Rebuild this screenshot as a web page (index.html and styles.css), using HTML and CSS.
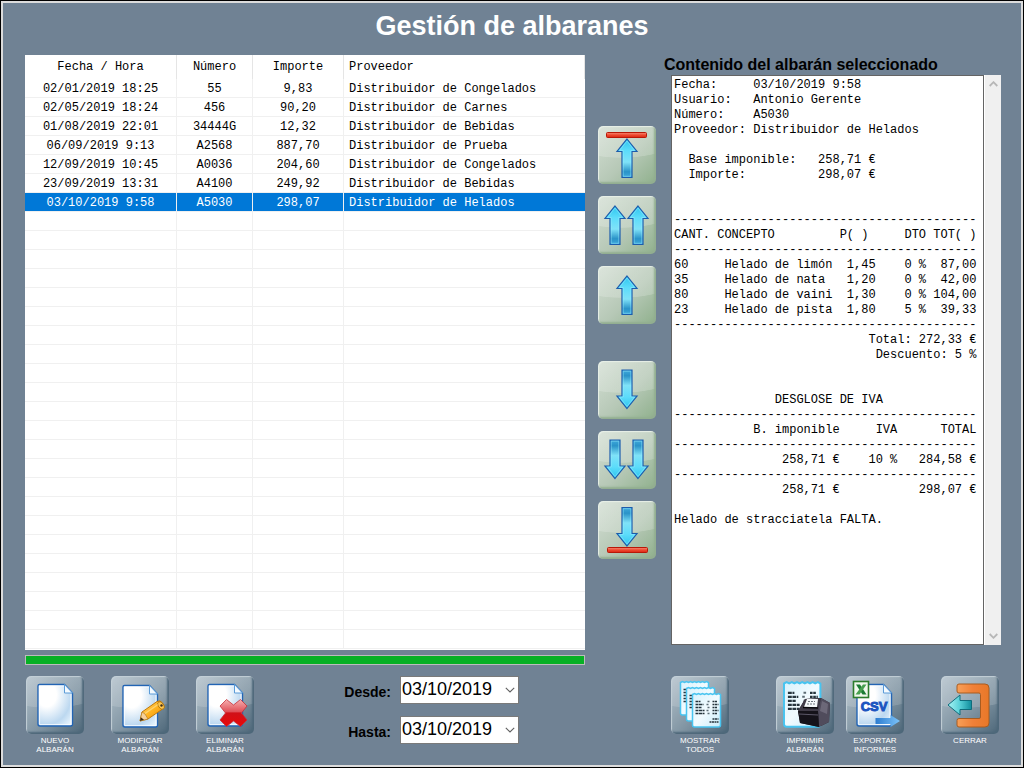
FILE: index.html
```html
<!DOCTYPE html>
<html lang="es">
  <head>
    <meta charset="UTF-8">
    <title>Gestión de albaranes</title>
    <link rel="stylesheet" href="styles.css">
  </head>

  <body>

    <!-- shared gradients and shapes -->
    <svg class="defs" width="0" height="0" aria-hidden="true">
      <defs>
        <linearGradient id="gArrow" x1="0" y1="0" x2="0" y2="1">
          <stop offset="0" stop-color="#2cc4ee"/>
          <stop offset=".3" stop-color="#5cdcfa"/>
          <stop offset=".6" stop-color="#7fe2f8"/>
          <stop offset=".85" stop-color="#2a93c8"/>
          <stop offset="1" stop-color="#3fa9dc"/>
        </linearGradient>
        <linearGradient id="gRed" x1="0" y1="0" x2="0" y2="1">
          <stop offset="0" stop-color="#f58d78"/>
          <stop offset=".5" stop-color="#ee4a30"/>
          <stop offset="1" stop-color="#dc2410"/>
        </linearGradient>
        <linearGradient id="gCross" x1="0" y1="0" x2="0" y2="1">
          <stop offset="0" stop-color="#f6b0b0"/>
          <stop offset=".45" stop-color="#e05058"/>
          <stop offset=".5" stop-color="#d01018"/>
          <stop offset="1" stop-color="#e80808"/>
        </linearGradient>
        <radialGradient id="gPage" cx=".25" cy=".25" r=".95">
          <stop offset="0" stop-color="#ffffff"/>
          <stop offset=".3" stop-color="#ffffff"/>
          <stop offset=".75" stop-color="#bcd8f0"/>
          <stop offset="1" stop-color="#e4f2fc"/>
        </radialGradient>
        <linearGradient id="gPencil" x1="0" y1="0" x2="1" y2="1">
          <stop offset="0" stop-color="#ffe088"/>
          <stop offset=".5" stop-color="#ffb420"/>
          <stop offset="1" stop-color="#e88800"/>
        </linearGradient>
        <linearGradient id="gSheet" x1="0" y1="0" x2="1" y2="1">
          <stop offset="0" stop-color="#d8f2fc"/>
          <stop offset=".5" stop-color="#f2fbff"/>
          <stop offset="1" stop-color="#c8ecfa"/>
        </linearGradient>
        <linearGradient id="gSend" x1="0" y1="0" x2="1" y2="0">
          <stop offset="0" stop-color="#2c7cd0"/>
          <stop offset="1" stop-color="#7cc4fa"/>
        </linearGradient>
        <linearGradient id="gOrange" x1="0" y1="0" x2="1" y2="0">
          <stop offset="0" stop-color="#f8a058"/>
          <stop offset=".5" stop-color="#f08038"/>
          <stop offset="1" stop-color="#e87828"/>
        </linearGradient>
        <linearGradient id="gTeal" x1="0" y1="0" x2="1" y2="0">
          <stop offset="0" stop-color="#a8f4f4"/>
          <stop offset=".5" stop-color="#58d0d8"/>
          <stop offset="1" stop-color="#108c9c"/>
        </linearGradient>
        <g id="arrow">
          <path d="M10.500 1 L20.500 13.500 H15.500 V39.500 H5.500 V13.500 H.5Z" fill="url(#gArrow)" stroke="#1c5cac" stroke-width="1.200"/>
          <path d="M10.500 3 L18 12.500 H14.300 V38.300 H6.700 V12.500 H3Z" fill="none" stroke="#9cecfc" stroke-width=".7" opacity=".7"/>
        </g>
        <g id="page">
          <path d="M13.500 8.500 H38.500 L46.500 17 V48 Q46.500 50 44.500 50 H14 Q12 50 12 48 V10 Q12 8.500 13.500 8.500Z" fill="url(#gPage)" stroke="#2264b4" stroke-width="1.400"/>
          <path d="M13.500 48.500 V10 H38 M45 18 V48.500 H14" fill="none" stroke="#ffffff" stroke-width="1.200" opacity=".7"/>
          <path d="M38.500 8.500 V17 H46.500Z" fill="#f4faff" stroke="#5c9cd8"/>
        </g>
        <g id="sheet">
          <path d="M0 1.500 l2-1 2 1 2-1 2 1 2-1 2 1 2-1 2 1 2-1 2 1 2-1 2 1 2-1 2 1 V32 Q28 34 26 34 H2 Q0 34 0 32Z" fill="url(#gSheet)" stroke="#48c4f0" stroke-width="1.500"/>
          <path d="M3 8.500h5 M3 11.500h8 M3 14.500h6 M3 17.500h9 M3 20.500h9" stroke="#26343c" stroke-width="1.700" stroke-dasharray="3 .5"/>
          <path d="M15 8.500h2 M14 11.500h2 M15 14.500h2 M14 17.500h2 M15 20.500h2" stroke="#5c6c74" stroke-width="1.400"/>
          <path d="M20 8.500h5 M20 11.500h6 M20 14.500h5 M20 17.500h6 M20 20.500h5 M20 26h6 M17 29h9" stroke="#26343c" stroke-width="1.700" stroke-dasharray="2 .5"/>
        </g>
      </defs>
    </svg>

    <div class="window">
      <h1 class="title">Gestión de albaranes</h1>

      <div class="main">
        <div class="list">
          <table class="albaranes">
            <colgroup><col class="col-fecha"><col class="col-numero"><col class="col-importe"><col></colgroup>
            <thead>
              <tr><th>Fecha / Hora</th><th>Número</th><th>Importe</th><th>Proveedor</th></tr>
            </thead>
            <tbody>
              <tr><td>02/01/2019 18:25</td><td>55</td><td>9,83</td><td>Distribuidor de Congelados</td></tr>
              <tr><td>02/05/2019 18:24</td><td>456</td><td>90,20</td><td>Distribuidor de Carnes</td></tr>
              <tr><td>01/08/2019 22:01</td><td>34444G</td><td>12,32</td><td>Distribuidor de Bebidas</td></tr>
              <tr><td>06/09/2019 9:13</td><td>A2568</td><td>887,70</td><td>Distribuidor de Prueba</td></tr>
              <tr><td>12/09/2019 10:45</td><td>A0036</td><td>204,60</td><td>Distribuidor de Congelados</td></tr>
              <tr><td>23/09/2019 13:31</td><td>A4100</td><td>249,92</td><td>Distribuidor de Bebidas</td></tr>
              <tr class="selected"><td>03/10/2019 9:58</td><td>A5030</td><td>298,07</td><td>Distribuidor de Helados</td></tr>
              <tr><td></td><td></td><td></td><td></td></tr>
              <tr><td></td><td></td><td></td><td></td></tr>
              <tr><td></td><td></td><td></td><td></td></tr>
              <tr><td></td><td></td><td></td><td></td></tr>
              <tr><td></td><td></td><td></td><td></td></tr>
              <tr><td></td><td></td><td></td><td></td></tr>
              <tr><td></td><td></td><td></td><td></td></tr>
              <tr><td></td><td></td><td></td><td></td></tr>
              <tr><td></td><td></td><td></td><td></td></tr>
              <tr><td></td><td></td><td></td><td></td></tr>
              <tr><td></td><td></td><td></td><td></td></tr>
              <tr><td></td><td></td><td></td><td></td></tr>
              <tr><td></td><td></td><td></td><td></td></tr>
              <tr><td></td><td></td><td></td><td></td></tr>
              <tr><td></td><td></td><td></td><td></td></tr>
              <tr><td></td><td></td><td></td><td></td></tr>
              <tr><td></td><td></td><td></td><td></td></tr>
              <tr><td></td><td></td><td></td><td></td></tr>
              <tr><td></td><td></td><td></td><td></td></tr>
              <tr><td></td><td></td><td></td><td></td></tr>
              <tr><td></td><td></td><td></td><td></td></tr>
              <tr><td></td><td></td><td></td><td></td></tr>
              <tr><td></td><td></td><td></td><td></td></tr>
            </tbody>
          </table>
          <progress class="carga" value="100" max="100" aria-label="Carga"></progress>
        </div>

        <div class="moves">
          <button type="button" class="tile green" aria-label="Primero">
            <svg width="58" height="58" viewBox="0 0 58 58"><rect x="8.500" y="6.500" width="40" height="5" rx="1" fill="url(#gRed)" stroke="#b81808"/><use href="#arrow" x="18.500" y="12"/></svg>
          </button>
          <button type="button" class="tile green" aria-label="Retroceder página">
            <svg width="58" height="58" viewBox="0 0 58 58"><use href="#arrow" x="6.500" y="9"/><use href="#arrow" x="29.500" y="9"/></svg>
          </button>
          <button type="button" class="tile green" aria-label="Anterior">
            <svg width="58" height="58" viewBox="0 0 58 58"><use href="#arrow" x="18.500" y="9"/></svg>
          </button>
          <button type="button" class="tile green next" aria-label="Siguiente">
            <svg width="58" height="58" viewBox="0 0 58 58"><use href="#arrow" transform="translate(18.500 48.500) scale(1 -1)"/></svg>
          </button>
          <button type="button" class="tile green" aria-label="Avanzar página">
            <svg width="58" height="58" viewBox="0 0 58 58"><use href="#arrow" transform="translate(6.500 48.500) scale(1 -1)"/><use href="#arrow" transform="translate(29.500 48.500) scale(1 -1)"/></svg>
          </button>
          <button type="button" class="tile green" aria-label="Último">
            <svg width="58" height="58" viewBox="0 0 58 58"><rect x="9.500" y="46.500" width="40" height="5" rx="1" fill="url(#gRed)" stroke="#b81808"/><use href="#arrow" transform="translate(18.500 46) scale(1 -1)"/></svg>
          </button>
        </div>

        <div class="detail">
          <label class="subtitle" for="contenido">Contenido del albarán seleccionado</label>
          <div class="viewer">
            <textarea id="contenido" class="receipt" readonly wrap="off">
Fecha:     03/10/2019 9:58
Usuario:   Antonio Gerente
Número:    A5030
Proveedor: Distribuidor de Helados

  Base imponible:   258,71 €
  Importe:          298,07 €


------------------------------------------
CANT. CONCEPTO         P( )     DTO TOT( )
------------------------------------------
60     Helado de limón  1,45    0 %  87,00
35     Helado de nata   1,20    0 %  42,00
80     Helado de vaini  1,30    0 % 104,00
23     Helado de pista  1,80    5 %  39,33
------------------------------------------
                           Total: 272,33 €
                            Descuento: 5 %


              DESGLOSE DE IVA
------------------------------------------
           B. imponible     IVA      TOTAL
------------------------------------------
               258,71 €    10 %   284,58 €
------------------------------------------
               258,71 €           298,07 €

Helado de stracciatela FALTA.</textarea>
            <div class="scroll">
              <svg width="9" height="6" viewBox="0 0 9 6"><path d="M.7 5 L4.500 1.200 L8.300 5" fill="none" stroke="#b8b8b8" stroke-width="1.800"/></svg>
              <svg width="9" height="6" viewBox="0 0 9 6"><path d="M.7 1 L4.500 4.800 L8.300 1" fill="none" stroke="#b8b8b8" stroke-width="1.800"/></svg>
            </div>
          </div>
        </div>
      </div>

      <div class="footer">
        <div class="edit">
          <button type="button" class="action">
            <span class="tile blue"><svg width="58" height="58" viewBox="0 0 58 58"><use href="#page"/></svg></span>
            NUEVO<br>ALBARÁN
          </button>
          <button type="button" class="action">
            <span class="tile blue"><svg width="58" height="58" viewBox="0 0 58 58">
              <use href="#page" y="1"/>
              <path d="M29 45 L31 36 L46 25.500 Q49 23.500 51.500 27 Q54 31 51.500 33 L37 43Z" fill="url(#gPencil)" stroke="#c07808"/>
              <path d="M29 45 L31 36 L34 38 L37 43Z" fill="#f4d09c" stroke="#b07818" stroke-width=".6"/>
              <path d="M29 45 L29.800 41.200 L33 43.800Z" fill="#3c2c18"/>
              <ellipse cx="50" cy="29.500" rx="2.600" ry="4.200" transform="rotate(-32 50 29.500)" fill="#ffc850" stroke="#a86c08" stroke-width=".8"/>
              <circle cx="50.500" cy="29.500" r="1.200" fill="#40301c"/>
              <path d="M34 37.500 L47 28.500" stroke="#fff0b0" stroke-width="1.500" opacity=".5"/>
            </svg></span>
            MODIFICAR<br>ALBARÁN
          </button>
          <button type="button" class="action">
            <span class="tile blue"><svg width="58" height="58" viewBox="0 0 58 58">
              <use href="#page"/>
              <path d="M30.500 23.500 L37.500 29 L44.500 23.500 L51 30 L45.500 37 L51 44 L44.500 50.500 L37.500 45 L30.500 50.500 L24 44 L29.500 37 L24 30Z" fill="url(#gCross)" stroke="#c83038" stroke-width=".8" stroke-linejoin="round"/>
            </svg></span>
            ELIMINAR<br>ALBARÁN
          </button>
        </div>

        <div class="dates">
          <label for="desde">Desde:</label>
          <div class="date">
            <select id="desde"><option>03/10/2019</option></select>
            <svg class="chevron" width="10" height="6" viewBox="0 0 10 6"><path d="M.8 .8 L5 5 L9.200 .8" fill="none" stroke="#606060" stroke-width="1.100"/></svg>
          </div>
          <label for="hasta">Hasta:</label>
          <div class="date">
            <select id="hasta"><option>03/10/2019</option></select>
            <svg class="chevron" width="10" height="6" viewBox="0 0 10 6"><path d="M.8 .8 L5 5 L9.200 .8" fill="none" stroke="#606060" stroke-width="1.100"/></svg>
          </div>
        </div>

        <div class="output">
          <button type="button" class="action">
            <span class="tile blue"><svg width="58" height="58" viewBox="0 0 58 58"><use href="#sheet" x="9.500" y="5"/><use href="#sheet" x="15.500" y="11"/><use href="#sheet" x="21.500" y="17"/></svg></span>
            MOSTRAR<br>TODOS
          </button>
          <div class="report">
            <button type="button" class="action">
              <span class="tile blue"><svg width="58" height="58" viewBox="0 0 58 58">
                <use href="#sheet" transform="translate(8 5.500) scale(1.300 1.330)"/>
                <path d="M22 35 L29 23 L45 22 L54 27 L53 46 L43 51 L24 47Z" fill="#282530"/>
                <path d="M22 35 L29 23 L45 22 L42 35Z" fill="#403c48"/>
                <path d="M45 22 L54 27 L53 46 L43 51 L42 35Z" fill="#504c5c"/>
                <path d="M46 25 L52 28 L51 38 L44 35Z" fill="#6c6878"/>
                <path d="M22 35 H42 L43 51 L24 47Z" fill="#15131a"/>
                <path d="M23 38 L42 39" stroke="#5c5868"/>
                <path d="M28 31 L31 23 L42 23 L41 31Z" fill="#f4f8fa"/>
                <path d="M32 25.500h7 M31 28h8" stroke="#6c747c" stroke-dasharray="2 1"/>
                <path d="M27 31.500 L42 32" stroke="#08080c" stroke-width="1.400"/>
              </svg></span>
              IMPRIMIR<br>ALBARÁN
            </button>
            <button type="button" class="action">
              <span class="tile blue"><svg width="58" height="58" viewBox="0 0 58 58">
                <use href="#page" x="-1"/>
                <rect x="7.500" y="5.500" width="15" height="16" fill="#f0f8ec" stroke="#2c7c2c" stroke-width="1.600"/>
                <path d="M10 8.500 H14 L20.500 18.500 H16.500Z" fill="#1c7c34"/>
                <path d="M17 8.500 H20.500 L13.500 18.500 H9.500Z" fill="#48a050"/>
                <text class="csv" x="28" y="35" text-anchor="middle">CSV</text>
                <path d="M29.500 42 H44.500 V39 L54 45 L44.500 51 V48 H29.500Z" fill="url(#gSend)"/>
              </svg></span>
              EXPORTAR<br>INFORMES
            </button>
          </div>
          <button type="button" class="action">
            <span class="tile blue"><svg width="58" height="58" viewBox="0 0 58 58">
              <path d="M18 8 H44 Q48 8 48 12 V47 Q48 51 44 51 H18 Q16 51 16 49 V44.500 Q16 42.500 18 42.500 H38 Q39.500 42.500 39.500 41 V18.500 Q39.500 17 38 17 H18 Q16 17 16 15 V10 Q16 8 18 8Z" fill="url(#gOrange)" stroke="#a85c20"/>
              <path d="M7 29 L19 19 V24.500 H30.500 V33.500 H19 V39Z" fill="url(#gTeal)" stroke="#106c7c" stroke-linejoin="round"/>
            </svg></span>
            CERRAR
          </button>
        </div>
      </div>
    </div>

  </body>

</html>
```
FILE: styles.css
```css
* {
  box-sizing: border-box;
}

body {
  margin: 0;
  background-color: black;
  font-family: "Liberation Sans", Arial, sans-serif;
}

.defs {
  position: absolute;
}

.window {
  min-height: calc(100vh - 2px);
  margin: 1px;
  padding: 0 20px 0 22px;
  border: 2px solid #dcdcdc;
  background-color: #708294;
}

.title {
  margin: 0;
  padding: 0 2px 5px 0;
  font-size: 27px;
  line-height: 47px;
  text-align: center;
  color: white;
}

/* list, move buttons and detail */

.main {
  display: flex;
}

.list {
  flex: 1;
}

.albaranes {
  width: 100%;
  table-layout: fixed;
  border-collapse: separate;
  border-spacing: 0;
  border-bottom: 1px solid white;
  background-color: white;
  font-family: "Liberation Mono", "Courier New", monospace;
  font-size: 12px;
  line-height: 16px;
}

.col-fecha {
  width: 152px;
}

.col-numero {
  width: 76px;
}

.col-importe {
  width: 91px;
}

.albaranes th {
  height: 24px;
  padding: 0;
  border-right: 1px solid #e5e5e5;
  font-weight: normal;
}

.albaranes td {
  height: 19px;
  padding: 2px 0 0;
  border-right: 1px solid #f0f0f0;
  border-bottom: 1px solid #f0f0f0;
  text-align: center;
}

.albaranes th:last-child,
.albaranes td:last-child {
  padding-left: 5px;
  text-align: left;
}

.albaranes td:last-child {
  border-right: 0;
}

.selected td {
  background-color: #0078d7;
  background-clip: padding-box;
  color: white;
}

.carga {
  display: block;
  width: 100%;
  height: 10px;
  margin-top: 5px;
  border: 1px solid #bcbcbc;
  background-color: #e6e6e6;
  appearance: none;
}

.carga::-webkit-progress-bar {
  background-color: #e6e6e6;
}

.carga::-webkit-progress-value {
  background-color: #06b025;
}

.moves {
  display: flex;
  flex-direction: column;
  gap: 12px;
  margin: 71px 8px 0 13px;
}

.moves .next {
  margin-top: 25px;
}

.tile {
  display: block;
  width: 58px;
  height: 58px;
  padding: 0;
  border: 0;
  border-radius: 5px;
}

.tile svg {
  display: block;
}

.green {
  background:
    radial-gradient(ellipse 70px 32px at 40% 0, rgba(255,255,255,.18) 98%, transparent 100%),
    linear-gradient(135deg, #d4dfd4, #b6c8b6 55%, #8fb08c);
  box-shadow: inset 1px 1px 1px #e8f0e8, inset -2px -2px 2px #92ae90;
}

.blue {
  background:
    radial-gradient(ellipse 70px 32px at 40% 0, rgba(255,255,255,.14) 98%, transparent 100%),
    linear-gradient(135deg, #b4c2cc, #8296a4 55%, #4c6678);
  box-shadow: inset 1px 1px 1px #c4d0d8, inset -2px -2px 2px #4e687a;
}

.detail {
  width: 337px;
}

.subtitle {
  display: block;
  font-size: 16px;
  font-weight: bold;
  line-height: 20px;
}

.viewer {
  display: flex;
  height: 570px;
  margin-left: 7px;
}

.receipt {
  flex: 1;
  min-width: 0;
  margin: 0;
  padding: 2px;
  border: 1px solid #646464;
  border-radius: 0;
  outline: 0;
  resize: none;
  overflow: hidden;
  color: black;
  background-color: white;
  font-family: "Liberation Mono", "Courier New", monospace;
  font-size: 12px;
  line-height: 15px;
}

.scroll {
  display: flex;
  flex-direction: column;
  justify-content: space-between;
  align-items: center;
  width: 17px;
  padding: 6px 0;
  border-left: 1px solid white;
  background-color: #f0f0f0;
}

/* bottom bar */

.footer {
  display: flex;
  align-items: flex-start;
  margin-top: 11px;
}

.edit {
  display: flex;
  flex: 1;
  gap: 27px;
  padding-left: 1px;
}

.action {
  width: 58px;
  padding: 0;
  border: 0;
  background: none;
  font-family: inherit;
  font-size: 8px;
  line-height: 9px;
  text-align: center;
  color: white;
}

.action .tile {
  margin-bottom: 2px;
}

.dates {
  display: grid;
  grid-template-columns: auto 119px;
  gap: 12px 9px;
  align-items: center;
  justify-items: end;
  font-size: 14px;
  font-weight: bold;
}

.dates label {
  padding-top: 3px;
}

.date {
  position: relative;
  width: 119px;
}

.date select {
  display: block;
  width: 100%;
  height: 28px;
  padding: 0 1px 2px;
  border: 1px solid #7a7a7a;
  border-radius: 0;
  color: black;
  background-color: white;
  font-family: inherit;
  font-size: 18px;
  appearance: none;
}

.chevron {
  position: absolute;
  top: 11px;
  right: 4px;
  pointer-events: none;
}

.output {
  display: flex;
  align-items: flex-start;
  justify-content: space-between;
  width: 330px;
  margin-left: 152px;
  padding-right: 2px;
}

.report {
  display: flex;
  gap: 12px;
  padding-left: 10px;
}

.csv {
  font-size: 13px;
  font-weight: bold;
  fill: #1c54c0;
  stroke: #1c54c0;
  stroke-width: 1px;
}
```
